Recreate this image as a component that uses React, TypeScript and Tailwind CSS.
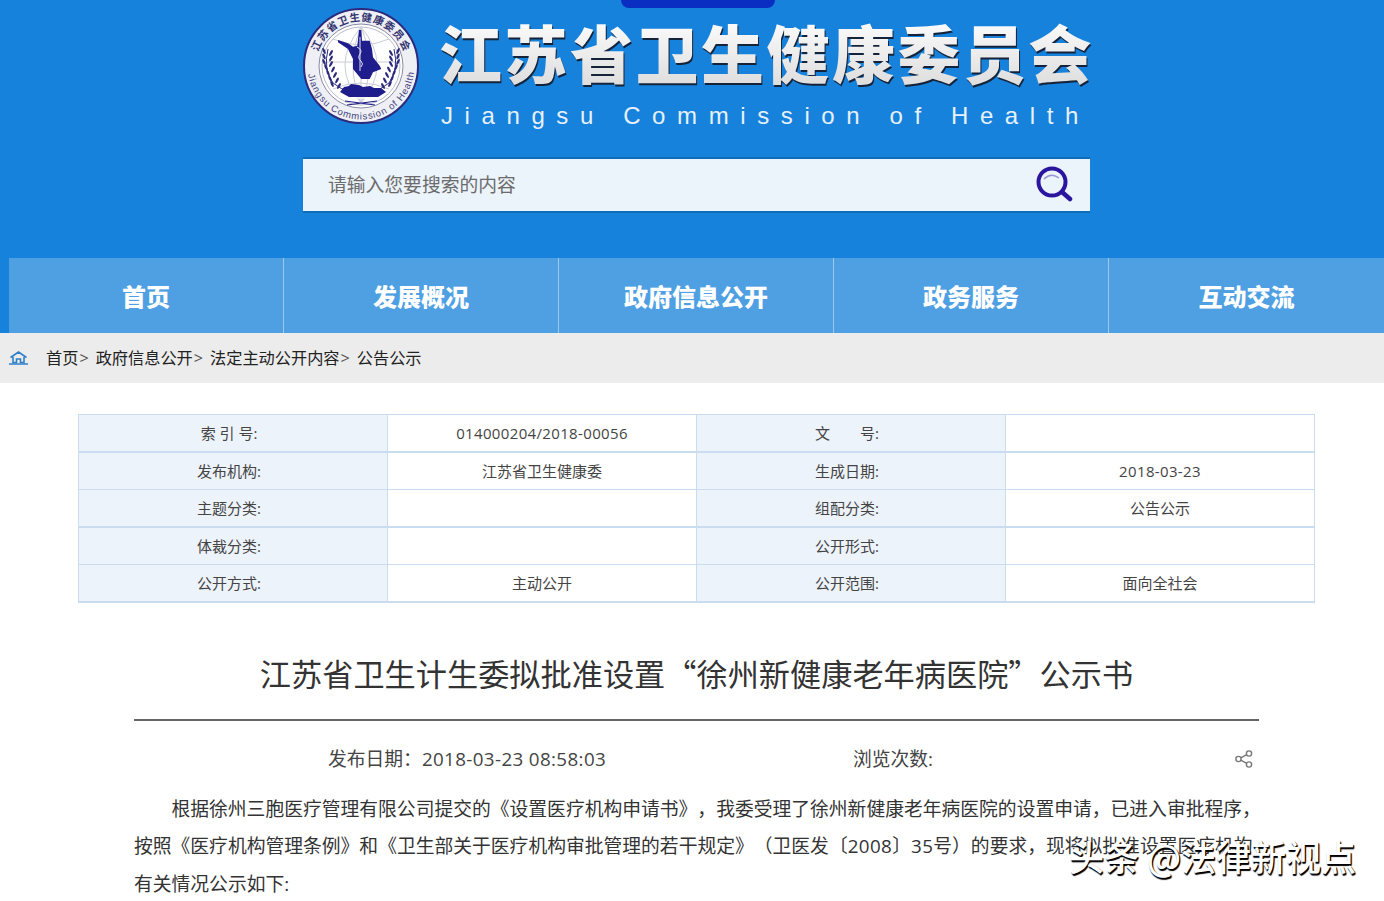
import React from "react";

const navItems = ["首页", "发展概况", "政府信息公开", "政务服务", "互动交流"];

const rows = [
    { cells: ["索 引 号:", "014000204/2018-00056", "文　　号:", ""], thick: true },
    { cells: ["发布机构:", "江苏省卫生健康委", "生成日期:", "2018-03-23"], thick: false },
    { cells: ["主题分类:", "", "组配分类:", "公告公示"], thick: true },
    { cells: ["体裁分类:", "", "公开形式:", ""], thick: false },
    { cells: ["公开方式:", "主动公开", "公开范围:", "面向全社会"], thick: true },
];

const leaves = [0, 1, 2, 3, 4, 5, 6];

function Logo() {
    return (
        <svg width="118" height="118" viewBox="0 0 118 118" className="shrink-0">
            <defs>
                <path id="sealTop" d="M 13 59 A 45 45 0 0 1 103 59" />
                <path id="sealBottom" d="M 4.5 59 A 53.5 53.5 0 0 0 111.5 59" />
            </defs>
            <circle cx="58" cy="59" r="57" fill="#eef0f6" stroke="#2c2a7c" strokeWidth="2" />
            <circle cx="58" cy="59" r="42" fill="#fff" stroke="#8a8aa6" strokeWidth="1" />
            <circle cx="58" cy="59" r="39" fill="none" stroke="#b8bccb" strokeWidth="1" />
            <path d="M20 55h76M58 20v76M30 32q28 12 56 0M30 82q28-12 56 0M58 20q-32 38 0 76M58 20q32 38 0 76M58 20q-16 38 0 76M58 20q16 38 0 76" fill="none" stroke="#c8ccd6" strokeWidth="1" />
            <text fontSize="10.5" fontWeight="700" fill="#34336f" fontFamily="'Noto Sans CJK SC', sans-serif" letterSpacing="0.8">
                <textPath href="#sealTop" startOffset="10%">江苏省卫生健康委员会</textPath>
            </text>
            <text fontSize="9.5" fill="#45447c" fontFamily="'Liberation Sans', sans-serif" letterSpacing="0.9">
                <textPath href="#sealBottom" startOffset="5%">Jiangsu Commission of Health</textPath>
            </text>
            {/* wreath */}
            <path d="M25 42q-5 20 5 34q8 7 17 8" fill="none" stroke="#2c2a7c" strokeWidth="1" />
            <path d="M91 42q5 20-5 34q-8 7-17 8" fill="none" stroke="#2c2a7c" strokeWidth="1" />
            {leaves.map((i) => {
                const drift = i < 3 ? 0 : (i - 2) * 2;
                const y = 44 + i * 5.5;
                return (
                    <g key={i} fill="#2c2a7c">
                        <ellipse cx={21 + drift} cy={y} rx="1.2" ry="3.2" transform={`rotate(-25 ${21 + drift} ${y})`} />
                        <ellipse cx={28 + drift} cy={y + 2} rx="1.2" ry="3.2" transform={`rotate(30 ${28 + drift} ${y + 2})`} />
                        <ellipse cx={95 - drift} cy={y} rx="1.2" ry="3.2" transform={`rotate(25 ${95 - drift} ${y})`} />
                        <ellipse cx={88 - drift} cy={y + 2} rx="1.2" ry="3.2" transform={`rotate(-30 ${88 - drift} ${y + 2})`} />
                    </g>
                );
            })}
            {/* map and staff */}
            <path d="M35 33 45 36.3 50 39.7 54.3 38.7 56 23 58.3 23 59 33.7 66.7 33.7 69 42 70 50.3 76.7 58.7 78.3 62 70 65.3 66.7 72 58.3 72 50 62 50 52 45 42 35 35.3z" fill="#1f1c8c" />
            <path d="M57 30v34M54 40q6 3 3 7t1 7q3 3 0 6" fill="none" stroke="#dfe0f2" strokeWidth="1" />
            {/* base */}
            <path d="M37 85l4-5 5-1 2-2 8 1 4 2 7-1 4 2 7 0 5 4-8 5H46z" fill="#1f1c8c" />
            <path d="M42 91h32" stroke="#fff" strokeWidth="1" />
            <path d="M44 98l30-4M72 98l-30-4" stroke="#1f1c8c" strokeWidth="1.2" />
        </svg>
    );
}

function SearchIcon() {
    return (
        <svg width="38" height="38" viewBox="0 0 38 38">
            <circle cx="17" cy="16" r="13.5" fill="none" stroke="#2a159f" strokeWidth="4" />
            <path d="M9 13q7-7 15-1" fill="none" stroke="#9c94d6" strokeWidth="1.5" />
            <path d="M27 26l8 7" stroke="#2a159f" strokeWidth="4.5" strokeLinecap="round" />
        </svg>
    );
}

function HomeIcon() {
    return (
        <svg width="19" height="14" viewBox="0 0 19 14" className="shrink-0">
            <path d="M1.5 6.5 9.5 1l8 5.5M4 6v5.5h3.5V8h4v3.5H15V6" fill="none" stroke="#2f7fc9" strokeWidth="1.6" />
            <path d="M0 13h19" stroke="#2f7fc9" strokeWidth="1.5" />
        </svg>
    );
}

function ShareIcon() {
    return (
        <svg width="20" height="20" viewBox="0 0 20 20">
            <g fill="none" stroke="#777" strokeWidth="1.4">
                <circle cx="4.5" cy="10" r="2.6" />
                <circle cx="15" cy="4.5" r="2.6" />
                <circle cx="15" cy="15.5" r="2.6" />
                <path d="M6.8 8.8 12.7 5.7M6.8 11.2l5.9 3.1" />
            </g>
        </svg>
    );
}

export default function App() {
    return (
        <div className="relative h-[901px] overflow-hidden bg-white font-['Open_Sans','Noto_Sans_CJK_SC',sans-serif] [text-spacing-trim:space-all]">
            <header className="relative h-[333px] bg-[#1682dc]">
                <div className="absolute left-[621px] top-0 h-2 w-[154px] rounded-b-lg bg-[#0a2dc2]" />
                <div className="flex h-[258px] flex-col pl-[303px] pt-[7px]">
                    <div className="flex items-start gap-[18px]">
                        <Logo />
                        <div className="pt-[6px]">
                            <div className="h-[76px] w-max bg-gradient-to-b from-white to-[#dcdcdc] bg-clip-text font-['Noto_Sans_CJK_SC',sans-serif] text-[63px] leading-[76px] font-black tracking-[2.5px] text-transparent drop-shadow-[1px_2px_0_#14233a]">
                                江苏省卫生健康委员会
                            </div>
                            <div className="ml-[2px] mt-[13px] whitespace-pre font-['Liberation_Sans',sans-serif] text-[24px] leading-[28px] tracking-[11.6px] text-[#e6f1fb]">
                                Jiangsu Commission of Health
                            </div>
                        </div>
                    </div>
                    <div className="mt-[27px] flex h-[56px] w-[787px] items-center justify-between border-y-2 border-[#0e6db9] bg-[#ebf3fb] pl-[25px] pr-[17px] text-[18.8px] text-[#6b6b6b]">
                        <span>请输入您要搜索的内容</span>
                        <SearchIcon />
                    </div>
                </div>
                <nav className="ml-[9px] flex h-[75px] bg-[#4f9fe3]">
                    {navItems.map((item, i) => (
                        <div
                            key={item}
                            className={`flex w-[275px] items-center justify-center pt-[3px] text-2xl font-black text-white ${i < 4 ? "border-r border-[#9cc8ee]" : ""}`}
                        >
                            {item}
                        </div>
                    ))}
                </nav>
            </header>

            <div className="flex h-[50px] items-center bg-[#ececec] pl-[9px] text-[16.2px] text-[#222]">
                <HomeIcon />
                <div className="ml-[18px] flex pt-[1px]">
                    <span>首页</span>
                    <span className="ml-[1px] mr-[7px] text-[#555]">&gt;</span>
                    <span>政府信息公开</span>
                    <span className="ml-[1px] mr-[7px] text-[#555]">&gt;</span>
                    <span>法定主动公开内容</span>
                    <span className="ml-[1px] mr-[7px] text-[#555]">&gt;</span>
                    <span>公告公示</span>
                </div>
            </div>

            <main>
                <div className="ml-[78px] mt-[31px] w-[1237px] border-x border-t border-[#c9dcf0] text-[15px] text-[#444]">
                    {rows.map((row, i) => (
                        <div
                            key={i}
                            className={`flex h-[37.5px] border-[#c9dcf0] ${row.thick ? "border-b-2" : "border-b"}`}
                        >
                            {row.cells.map((cell, j) => (
                                <div
                                    key={j}
                                    className={`flex items-center justify-center whitespace-pre border-[#c9dcf0] pt-[1px] ${j % 2 === 0 ? "bg-[#edf3fb] pr-[8px]" : ""} ${j < 3 ? "w-[309px] shrink-0 border-r" : "flex-1"} ${/^\d/.test(cell) ? "tracking-[0.35px]" : ""}`}
                                >
                                    {cell}
                                </div>
                            ))}
                        </div>
                    ))}
                </div>

                <article className="mx-[134px] mt-[46px] w-[1125px] text-[#333]">
                    <h1 className="border-b-2 border-[#666] pb-[22px] text-center font-['Noto_Sans_CJK_SC',sans-serif] text-[31.2px] leading-[48px] font-normal">
                        江苏省卫生计生委拟批准设置“徐州新健康老年病医院”公示书
                    </h1>
                    <div className="mt-[20px] flex h-[37px] items-center text-[18.8px] text-[#444]">
                        <span className="ml-[194px] w-[525px]">发布日期：<span className="tracking-[0.37px]">2018-03-23 08:58:03</span></span>
                        <span>浏览次数:</span>
                        <span className="ml-auto mr-[5px] flex"><ShareIcon /></span>
                    </div>
                    <p className="mt-[13px] indent-[37.5px] whitespace-nowrap text-[18.8px] leading-[37.5px] text-[#333]">
                        根据徐州三胞医疗管理有限公司提交的《设置医疗机构申请书》，我委受理了徐州新健康老年病医院的设置申请，已进入审批程序，<br />
                        按照《医疗机构管理条例》和《卫生部关于医疗机构审批管理的若干规定》（卫医发〔<span className="tracking-[0.4px]">2008</span>〕<span className="tracking-[0.4px]">35</span>号）的要求，现将拟批准设置医疗机构<br />
                        有关情况公示如下:
                    </p>
                </article>
            </main>

            <div className="absolute left-[1069px] top-[834px] font-['Noto_Sans_CJK_SC',sans-serif] text-[35px] leading-[44px] font-medium whitespace-pre text-white [text-shadow:1px_1px_1px_#000,1px_2px_1px_#000]">
                头条 @法律新视点
            </div>
        </div>
    );
}
